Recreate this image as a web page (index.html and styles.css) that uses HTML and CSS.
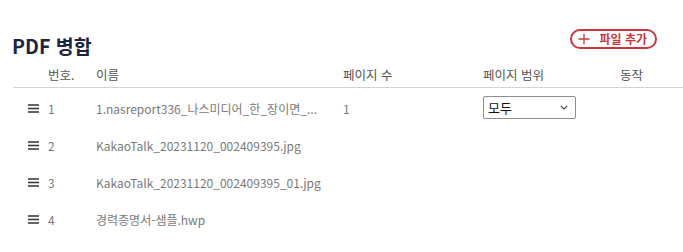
FILE: index.html
```html
<!DOCTYPE html>
<html lang="ko">
<head>
<meta charset="utf-8">
<title>PDF 병합</title>
<link rel="stylesheet" href="styles.css">
</head>
<body>
<div class="page">
  <div class="topbar">
    <h1 class="title">PDF 병합</h1>
    <button class="add-btn" type="button">
      <svg class="plus" width="12" height="12" viewBox="0 0 12 12"><path d="M6 0.5V11.5M0.5 6H11.5" stroke="currentColor" stroke-width="1.3" fill="none"/></svg>
      <span>파일 추가</span>
    </button>
  </div>
  <div class="table">
    <div class="row head">
      <div class="c-handle"></div>
      <div class="c-num">번호.</div>
      <div class="c-name">이름</div>
      <div class="c-pages">페이지 수</div>
      <div class="c-range">페이지 범위</div>
      <div class="c-act">동작</div>
    </div>
    <div class="rows">
      <div class="row item">
        <div class="c-handle"><svg width="11" height="9" viewBox="0 0 11 9"><path d="M0 1H11M0 4.5H11M0 8H11" stroke="#333" stroke-width="1.3"/></svg></div>
        <div class="c-num">1</div>
        <div class="c-name">1.nasreport336_나스미디어_한_장이면_...</div>
        <div class="c-pages">1</div>
        <div class="c-range">
          <div class="select"><span>모두</span><svg width="8" height="5" viewBox="0 0 8 5"><path d="M0.8 0.8L4 4L7.2 0.8" stroke="#444" stroke-width="1.1" fill="none"/></svg></div>
        </div>
        <div class="c-act"></div>
      </div>
      <div class="row item">
        <div class="c-handle"><svg width="11" height="9" viewBox="0 0 11 9"><path d="M0 1H11M0 4.5H11M0 8H11" stroke="#333" stroke-width="1.3"/></svg></div>
        <div class="c-num">2</div>
        <div class="c-name">KakaoTalk_20231120_002409395.jpg</div>
        <div class="c-pages"></div>
        <div class="c-range"></div>
        <div class="c-act"></div>
      </div>
      <div class="row item">
        <div class="c-handle"><svg width="11" height="9" viewBox="0 0 11 9"><path d="M0 1H11M0 4.5H11M0 8H11" stroke="#333" stroke-width="1.3"/></svg></div>
        <div class="c-num">3</div>
        <div class="c-name">KakaoTalk_20231120_002409395_01.jpg</div>
        <div class="c-pages"></div>
        <div class="c-range"></div>
        <div class="c-act"></div>
      </div>
      <div class="row item">
        <div class="c-handle"><svg width="11" height="9" viewBox="0 0 11 9"><path d="M0 1H11M0 4.5H11M0 8H11" stroke="#333" stroke-width="1.3"/></svg></div>
        <div class="c-num">4</div>
        <div class="c-name">경력증명서-샘플.hwp</div>
        <div class="c-pages"></div>
        <div class="c-range"></div>
        <div class="c-act"></div>
      </div>
    </div>
  </div>
</div>
</body>
</html>
```

FILE: styles.css
```css
* { box-sizing: border-box; }
html, body { margin: 0; padding: 0; background: #fff; }
body {
  font-family: "Noto Sans CJK KR", "Noto Sans", sans-serif;
  color: #666;
}
.page {
  padding: 29px 0 0 13px;
}
.topbar {
  display: flex;
  align-items: center;
  justify-content: space-between;
  height: 28px;
  padding-right: 26px;
}
.title {
  margin: 0 0 0 -1px;
  font-size: 19.5px;
  font-weight: 700;
  color: #1d2540;
  line-height: 28px;
  position: relative;
  top: 3px;
}
.add-btn {
  display: flex;
  align-items: center;
  gap: 9px;
  height: 20px;
  padding: 0 8px 0 6px;
  border: 2px solid #c8383d;
  border-radius: 10px;
  background: #fff;
  color: #c8383d;
  font-family: inherit;
  font-size: 12px;
  font-weight: 700;
  line-height: 1;
  position: relative;
  top: -4px;
}
.add-btn .plus { display: block; }
.table {
  margin-top: 5px;
}
.row {
  display: grid;
  grid-template-columns: 35px 48px 247px 140px 137px 1fr;
  align-items: center;
  font-size: 12px;
}
.row.head {
  height: 26px;
  border-bottom: 1px solid #d4d4d8;
  color: #555;
  font-size: 12.5px;
}
.rows {
  padding-top: 2px;
}
.row.item {
  height: 37px;
  color: #7a7a7a;
}
.c-handle {
  padding-left: 15px;
  display: flex;
  align-items: center;
}
.c-handle svg { display: block; }
.c-name {
  white-space: nowrap;
  overflow: hidden;
}
.select {
  width: 93px;
  height: 23px;
  border: 1px solid #8e8e96;
  border-radius: 2px;
  display: flex;
  align-items: center;
  justify-content: space-between;
  padding: 0 7px 0 4px;
  color: #111;
  font-size: 13px;
  position: relative;
  top: -1px;
}
.select svg { display: block; }
```
